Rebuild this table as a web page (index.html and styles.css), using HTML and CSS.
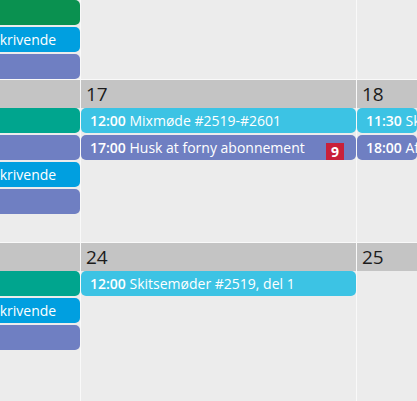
FILE: index.html
```html
<!DOCTYPE html>
<html lang="da">
<head>
<meta charset="utf-8">
<title>Kalender</title>
<link rel="stylesheet" href="styles.css">
</head>
<body>
<div class="cal">
  <div class="week week-top">
    <div class="day day-cut">
      <div class="ev ev-green"></div>
      <div class="ev ev-blue"><span class="cut-text">skrivende</span></div>
      <div class="ev ev-purple"></div>
    </div>
    <div class="day"></div>
    <div class="day"></div>
  </div>
  <div class="week">
    <div class="day day-cut">
      <div class="dhead"></div>
      <div class="ev ev-teal"></div>
      <div class="ev ev-purple"></div>
      <div class="ev ev-blue"><span class="cut-text">skrivende</span></div>
      <div class="ev ev-purple"></div>
    </div>
    <div class="day">
      <div class="dhead">17</div>
      <div class="ev ev-cyan"><b>12:00</b> Mixmøde #2519-#2601</div>
      <div class="ev ev-purple"><b>17:00</b> Husk at forny abonnement<span class="badge">9</span></div>
    </div>
    <div class="day">
      <div class="dhead">18</div>
      <div class="ev ev-cyan"><b>11:30</b> Skitsemøde</div>
      <div class="ev ev-purple"><b>18:00</b> Aftale</div>
    </div>
  </div>
  <div class="week week-last">
    <div class="day day-cut">
      <div class="dhead"></div>
      <div class="ev ev-teal"></div>
      <div class="ev ev-blue"><span class="cut-text">skrivende</span></div>
      <div class="ev ev-purple"></div>
    </div>
    <div class="day">
      <div class="dhead">24</div>
      <div class="ev ev-cyan"><b>12:00</b> Skitsemøder #2519, del 1</div>
    </div>
    <div class="day">
      <div class="dhead">25</div>
    </div>
  </div>
</div>
</body>
</html>
```
FILE: styles.css
```css
html, body {
  margin: 0;
  padding: 0;
  background: #ececec;
  overflow: hidden;
}
body {
  width: 417px;
  height: 401px;
  font-family: "Open Sans", "Noto Sans", sans-serif;
}
.cal {
  display: grid;
  row-gap: 1px;
  background: #f9f9f9;
  height: 401px;
  align-content: start;
}
.week {
  display: grid;
  grid-template-columns: 80px 275px 1fr;
  column-gap: 1px;
  height: 162px;
}
.week-top {
  height: 79px;
}
.week-last {
  height: 160px;
}
.day {
  background: #ececec;
  overflow: hidden;
  display: flex;
  flex-direction: column;
  min-width: 0;
}
.dhead {
  height: 28px;
  flex: none;
  background: #c4c4c4;
  color: #1c1c1c;
  font-size: 19px;
  line-height: 29px;
  padding-left: 5px;
}
.ev {
  position: relative;
  flex: none;
  height: 25px;
  margin-bottom: 2px;
  border-radius: 5px;
  color: #fff;
  font-size: 14px;
  line-height: 26px;
  padding-left: 9px;
  white-space: nowrap;
  overflow: hidden;
}
.ev b {
  font-weight: 600;
}
.day-cut .ev {
  margin-left: -20px;
  padding-left: 0;
}
.cut-text {
  display: inline-block;
  margin-left: 13px;
}
.ev-green { background: #0a9150; }
.ev-teal { background: #00a58e; }
.ev-blue { background: #009fe0; }
.ev-purple { background: #6f7fc2; }
.ev-cyan { background: #3cc3e4; }
.badge {
  position: absolute;
  right: 12px;
  bottom: 0;
  width: 18px;
  height: 17px;
  background: #c8203a;
  color: #fff;
  font-weight: 700;
  font-size: 14px;
  line-height: 17px;
  text-align: center;
}
```
